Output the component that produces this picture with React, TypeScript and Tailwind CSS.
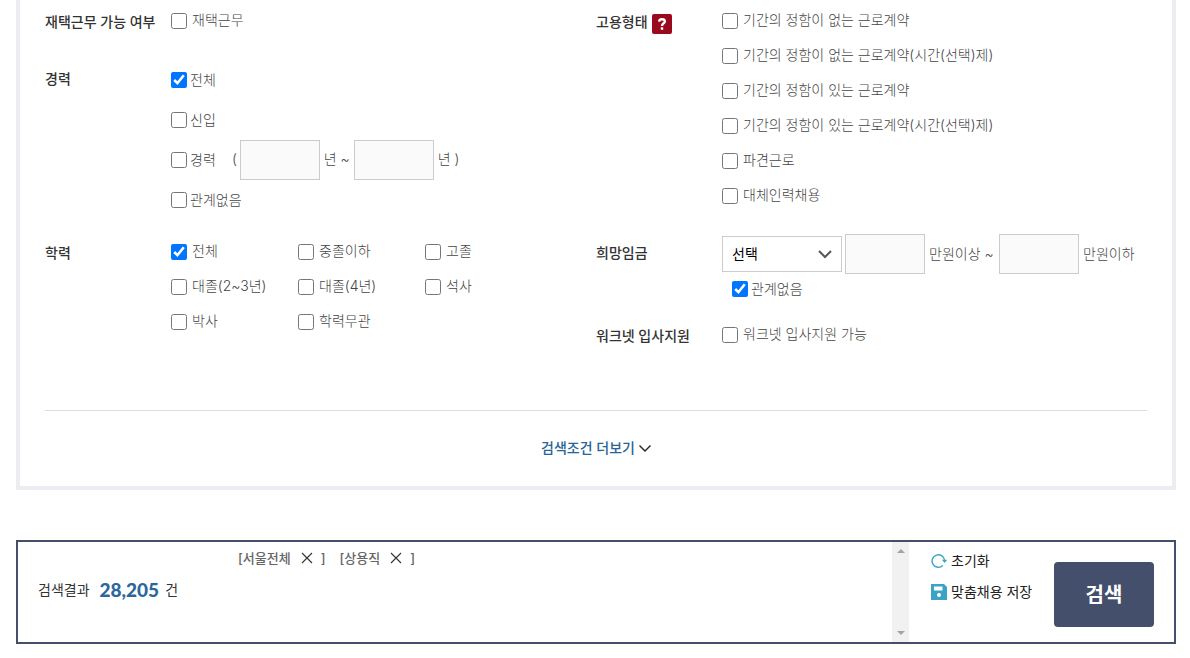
import { useState, type ReactNode } from 'react'

const employmentTypes = [
  '기간의 정함이 없는 근로계약',
  '기간의 정함이 없는 근로계약(시간(선택)제)',
  '기간의 정함이 있는 근로계약',
  '기간의 정함이 있는 근로계약(시간(선택)제)',
  '파견근로',
  '대체인력채용',
]

const educations = ['전체', '중졸이하', '고졸', '대졸(2~3년)', '대졸(4년)', '석사', '박사', '학력무관']

interface CheckProps {
  label: string
  checked?: boolean
  tight?: boolean
}

function Check({ label, checked = false, tight = false }: CheckProps) {
  return (
    <label className={`flex items-center whitespace-nowrap ${tight ? 'gap-[3px]' : 'gap-[5px]'}`}>
      <input type="checkbox" defaultChecked={checked} className="size-4 shrink-0" />
      <span className={tight ? '' : 'pb-0.5'}>{label}</span>
    </label>
  )
}

function Row({ title, extra, className = '', children }: { title: string; extra?: ReactNode; className?: string; children: ReactNode }) {
  return (
    <div role="group" aria-label={title} className={`flex ${className}`}>
      <div className="flex h-[38px] w-[126px] shrink-0 items-center gap-1 whitespace-nowrap font-medium text-[#333]">
        <span>{title}</span>
        {extra}
      </div>
      <div className="min-w-0 flex-1">{children}</div>
    </div>
  )
}

function NumberBox({ label }: { label: string }) {
  return <input type="text" aria-label={label} className="h-10 w-20 shrink-0 border border-[#ccc] bg-[#fafafa] px-2" />
}

function Chip({ label, onRemove }: { label: string; onRemove: () => void }) {
  return (
    <li className="flex items-center">
      <span>[{label}</span>
      <button type="button" onClick={onRemove} aria-label={`${label} 삭제`} className="mr-1.5 ml-2 p-0.5">
        <svg viewBox="0 0 12 12" className="size-3" fill="none" stroke="#333" strokeWidth="1.1">
          <path d="M1 1l10 10M11 1L1 11" />
        </svg>
      </button>
      <span>]</span>
    </li>
  )
}

export default function App() {
  const [chips, setChips] = useState(['서울전체', '상용직'])

  return (
    <div className="bg-white pr-3.5 pl-4 font-['Inter','Noto_Sans_CJK_KR',sans-serif] text-sm font-light text-[#444]">
      <form id="search" onSubmit={(e) => e.preventDefault()} className="border-x-4 border-b-4 border-[#ecedf0] px-[25px]">
        <div className="grid grid-cols-2 pt-[3px]">
          <div>
            <Row title="재택근무 가능 여부">
              <div className="flex h-[35px] items-center">
                <Check label="재택근무" />
              </div>
            </Row>
            <Row title="경력" className="mt-[19px]">
              <div className="flex h-10 items-center"><Check label="전체" checked tight /></div>
              <div className="flex h-10 items-center"><Check label="신입" tight /></div>
              <div className="flex h-10 items-center">
                <Check label="경력" tight />
                <span className="w-6 pr-[3px] pb-0.5 text-right">(</span>
                <NumberBox label="최소 경력" />
                <span className="w-[34px] pb-0.5 text-center">년 ~</span>
                <NumberBox label="최대 경력" />
                <span className="pb-0.5 pl-1">년 )</span>
              </div>
              <div className="flex h-10 items-center"><Check label="관계없음" tight /></div>
            </Row>
            <Row title="학력" className="mt-3.5">
              <div className="grid auto-rows-[35px] grid-cols-[repeat(3,127px)] items-center">
                {educations.map((e) => <Check key={e} label={e} checked={e === '전체'} />)}
              </div>
            </Row>
          </div>

          <div>
            <Row
              title="고용형태"
              extra={
                <button type="button" aria-label="고용형태 도움말" className="mt-1 flex size-5 items-center justify-center rounded-xs bg-[#990a1e]">
                  <svg viewBox="0 0 10 14" className="h-3 w-2.5" fill="none" stroke="#fff" strokeWidth="2.8">
                    <path d="M1.6 4.2C1.8 2.3 3.2 1.5 5 1.5c1.900 0 3.300.9 3.300 2.500C8.300 6.300 5 6.200 5 9.200M5 10.900v2.800" />
                  </svg>
                </button>
              }
            >
              {employmentTypes.map((t) => (
                <div key={t} className="flex h-[35px] items-center"><Check label={t} /></div>
              ))}
            </Row>
            <Row title="희망임금" className="mt-[21px]">
              <div className="flex items-center">
                <div className="relative mr-[3px] shrink-0">
                  <select aria-label="임금 형태" className="h-9 w-[120px] appearance-none border border-[#ccc] bg-white pl-[9px] font-normal text-black">
                    <option>선택</option>
                    <option>연봉</option>
                    <option>월급</option>
                    <option>시급</option>
                  </select>
                  <svg viewBox="0 0 14 9" className="pointer-events-none absolute top-3.5 right-2.5 h-[9px] w-3.5" fill="none" stroke="#555" strokeWidth="2">
                    <path d="M1 1l6 6 6-6" />
                  </svg>
                </div>
                <NumberBox label="최소 임금" />
                <span className="w-[74px] shrink-0 pl-1 whitespace-nowrap">만원이상 ~</span>
                <NumberBox label="최대 임금" />
                <span className="pl-1 whitespace-nowrap">만원이하</span>
              </div>
              <div className="flex h-[30px] items-center pl-2.5">
                <Check label="관계없음" checked tight />
              </div>
            </Row>
            <Row title="워크넷 입사지원" className="mt-[13px]">
              <div className="flex h-[35px] items-center">
                <Check label="워크넷 입사지원 가능" />
              </div>
            </Row>
          </div>
        </div>

        <div className="mt-[55px] flex h-[76px] items-center justify-center border-t border-[#ddd]">
          <button type="button" className="flex items-center gap-1 font-medium text-[#2a6496]">
            <span className="pb-0.5">검색조건 더보기</span>
            <svg viewBox="0 0 12 7" className="h-[7px] w-3" fill="none" stroke="#222" strokeWidth="1.4">
              <path d="M.5.5L6 6 11.500.5" />
            </svg>
          </button>
        </div>
      </form>

      <section className="mt-[50px] flex h-[104px] border-2 border-[#434f6b]">
        <p className="flex w-[202px] shrink-0 items-center pb-1 pl-5 font-normal text-[#333]">
          검색결과
          <strong className="mr-1.5 ml-2.5 font-[Lato,sans-serif] text-[19px] font-black text-[#2b679c]">28,205</strong>
          건
        </p>
        <div className="flex min-w-0 flex-1">
          <ul className="flex h-8 flex-1 items-center gap-3.5 pl-[18px] text-[13px] font-medium text-[#666]">
            {chips.map((c) => (
              <Chip key={c} label={c} onRemove={() => setChips((p) => p.filter((i) => i !== c))} />
            ))}
          </ul>
          <div aria-hidden="true" className="flex w-[17px] flex-col items-center justify-between bg-[#f1f1f1] py-[7px]">
            <svg viewBox="0 0 8 4" className="h-1 w-2" fill="#a3a3a3"><path d="M0 4l4-4 4 4z" /></svg>
            <svg viewBox="0 0 8 4" className="h-1 w-2" fill="#a3a3a3"><path d="M0 0l4 4 4-4z" /></svg>
          </div>
        </div>
        <div className="flex shrink-0 items-start justify-between pr-5 pl-[22px] font-normal text-[#222]">
          <div className="flex w-[123px] flex-col items-start pt-[3px]">
            <button type="reset" form="search" className="flex h-[31px] items-center gap-1">
              <svg viewBox="0 0 16 16" className="size-4" fill="none" stroke="#3ba4c4" strokeWidth="1.4">
                <path d="M13.700 7.500A6.300 6.300 0 1 0 11.800 12.600" />
                <path d="M10.800 6.800H16.200l-2.500 3.200z" fill="#3ba4c4" stroke="none" />
              </svg>
              초기화
            </button>
            <button type="button" className="flex h-[31px] items-center gap-1">
              <svg viewBox="0 0 16 16" className="size-4">
                <path d="M0 0h13l3 3v13H0z" fill="#3ba4c4" />
                <path d="M3 2.500h8.500v4H3z" fill="#fff" />
                <circle cx="8" cy="11" r="2" fill="#fff" />
              </svg>
              맞춤채용 저장
            </button>
          </div>
          <button type="submit" form="search" className="mt-5 h-[65px] w-[100px] rounded bg-[#434f6b] text-xl font-bold text-white">검색</button>
        </div>
      </section>
    </div>
  )
}
